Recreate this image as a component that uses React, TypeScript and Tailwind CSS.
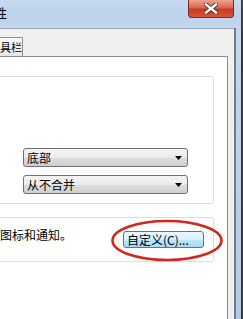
import React from "react";

const cjk = { fontFamily: '"Noto Sans CJK SC", "Noto Sans", sans-serif' };

function Combo({ label }: { label: string }) {
  return (
    <div className="flex h-[19px] w-[165px] items-center rounded-[3px] border border-[#707070] bg-[linear-gradient(to_bottom,#f4f4f4_0%,#ebebeb_50%,#dddddd_51%,#cfcfcf_100%)] pl-[3px] pr-[5px]">
      <span className="flex-1 text-[12px] leading-[16px] text-black">{label}</span>
      <svg width="7" height="4" viewBox="0 0 7 4">
        <path d="M0 0h7L3.5 4z" fill="#000" />
      </svg>
    </div>
  );
}

export default function App() {
  return (
    <div className="relative h-[319px] w-[243px] overflow-hidden bg-[#f0f0f0]" style={cjk}>
      {/* Title bar */}
      <div className="flex h-[28px] w-[243px] items-start border-r-2 border-[#3b3f45] bg-[linear-gradient(to_bottom,#c6d9ef,#bcd2eb_60%,#c3d7ee)]">
        <span className="-ml-[6px] whitespace-nowrap pt-[5px] text-[13px] leading-[16px] text-black">性</span>
        <div className="ml-auto mr-[7px] flex h-[18px] w-[46px] items-center justify-center rounded-b-[4px] border border-t-0 border-[#7a2a1e] bg-[linear-gradient(to_bottom,#eaa492_0%,#d9674f_45%,#c63b23_55%,#d4573b_100%)]">
          <svg width="14" height="11" viewBox="0 0 14 11">
            <path
              d="M2 1.5L12 9.5M12 1.5L2 9.5"
              stroke="#4a2a24"
              strokeWidth="4.2"
              strokeLinecap="square"
            />
            <path
              d="M2 1.5L12 9.5M12 1.5L2 9.5"
              stroke="#ffffff"
              strokeWidth="2.4"
              strokeLinecap="square"
            />
          </svg>
        </div>
      </div>

      {/* Body + right frame */}
      <div className="flex h-[291px]">
        <div className="flex w-[234px] flex-col border-t border-[#95a3b5] pt-[8px]">
          {/* Tab row */}
          <div className="flex h-[19px]">
            <div className="flex w-[23px] items-center justify-end rounded-tr-[2px] border-r border-t border-[#898c95] bg-[linear-gradient(to_bottom,#fafafa,#e6e6e6)]">
              <span className="whitespace-nowrap text-[11px] leading-[16px] text-black">具栏</span>
            </div>
          </div>

          {/* Tab panel */}
          <div className="flex w-[228px] flex-1 flex-col border-r border-t border-[#898c95] bg-white pr-[13px] pt-[19px]">
            {/* Group 1 */}
            <div className="-ml-[10px] flex h-[128px] flex-col gap-[8px] rounded-[3px] border border-[#d5dfe5] pl-[32px] pt-[71px]">
              <Combo label="底部" />
              <Combo label="从不合并" />
            </div>

            {/* Group 2 */}
            <div className="-ml-[10px] mt-[13px] flex h-[45px] items-start rounded-[3px] border border-[#d5dfe5] pl-[9px] pr-[9px]">
              <span className="whitespace-nowrap pt-[9px] text-[12px] leading-[16px] text-black">图标和通知。</span>
              <div className="ml-auto mt-[13px] flex h-[17px] w-[81px] items-center rounded-[3px] border border-[#3c7fb1] bg-[linear-gradient(to_bottom,#eaf6fd_0%,#d9f0fc_50%,#bee6fd_51%,#a7d9f5_100%)] pl-[3px]">
                <span className="whitespace-nowrap text-[12px] leading-[14px] text-black">自定义(C)...</span>
              </div>
            </div>
          </div>
        </div>

        {/* Right window frame */}
        <div className="flex w-[9px]">
          <div className="w-[2px] bg-[#6f7c8c]" />
          <div className="w-[5px] bg-[linear-gradient(to_bottom,#c4d7ee,#b3cae6)]" />
          <div className="w-[2px] bg-[#34383d]" />
        </div>
      </div>

      {/* Red annotation ellipse */}
      <svg className="absolute left-[110px] top-[219px]" width="114" height="44" viewBox="0 0 114 44">
        <ellipse cx="57" cy="21.5" rx="54.5" ry="19.5" fill="none" stroke="#d3261c" strokeWidth="2.6" />
      </svg>
    </div>
  );
}
